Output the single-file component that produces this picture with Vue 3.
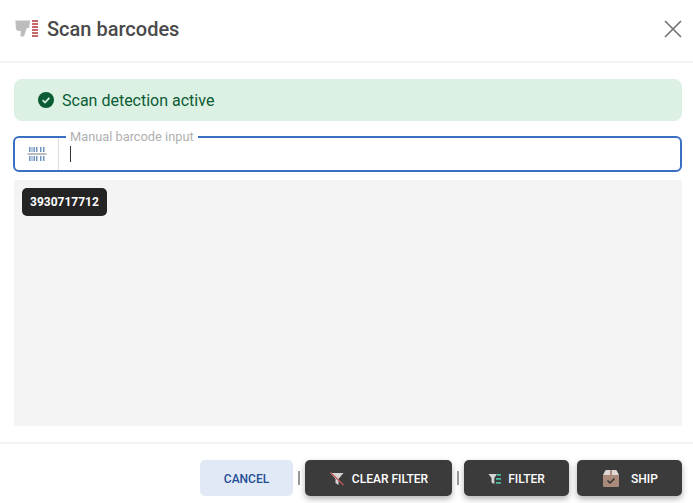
<script setup>
const barcodes = ['3930717712']
</script>

<template>
  <div class="dialog">
    <header class="head">
      <svg class="scan-icon" width="24" height="20" viewBox="0 0 24 20">
        <path d="M1 2H14.500L13.500 8.500H11.200L8.500 17H6L6.500 11.500H3.500L1.500 10Z" fill="#bdbdbd" stroke="#bdbdbd" stroke-width="1.200" stroke-linejoin="round" />
        <g fill="#c46868">
          <rect x="17" y="1" width="6" height="2" />
          <rect x="17" y="4" width="6" height="2" />
          <rect x="17" y="7" width="6" height="2" />
          <rect x="17" y="10" width="6" height="2" />
          <rect x="17" y="13" width="6" height="2" />
          <rect x="17" y="16" width="6" height="2" />
        </g>
      </svg>
      <h1 class="title">Scan barcodes</h1>
      <svg class="close" width="18" height="18" viewBox="0 0 18 18">
        <path d="M1 1 17 17M17 1 1 17" stroke="#757575" stroke-width="1.700" fill="none" />
      </svg>
    </header>

    <main class="body">
      <div class="alert">
        <svg width="16" height="16" viewBox="0 0 16 16">
          <circle cx="8" cy="8" r="8" fill="#0b5c33" />
          <path d="M4.600 8.200 7 10.500 11.400 5.900" stroke="#dff0e6" stroke-width="1.700" fill="none" />
        </svg>
        <span>Scan detection active</span>
      </div>

      <div class="field">
        <span class="legend">Manual barcode input</span>
        <div class="addon">
          <svg width="20" height="16" viewBox="0 0 20 16">
            <g fill="#6f93c0">
              <rect x="2" y="1" width="1.500" height="5" /><rect x="4.500" y="1" width="1" height="5" /><rect x="6.500" y="1" width="1.500" height="5" /><rect x="9" y="1" width="1.500" height="5" /><rect x="13" y="1" width="1.500" height="5" /><rect x="16" y="1" width="1.500" height="5" />
              <rect x="2" y="10" width="1.500" height="5" /><rect x="4.500" y="10" width="1" height="5" /><rect x="6.500" y="10" width="1.500" height="5" /><rect x="9" y="10" width="1.500" height="5" /><rect x="13" y="10" width="1.500" height="5" /><rect x="16" y="10" width="1.500" height="5" />
            </g>
            <rect x="0.500" y="7.200" width="19" height="1.600" fill="#adadad" />
          </svg>
        </div>
        <div class="entry"><span class="caret"></span></div>
      </div>

      <section class="results">
        <span v-for="code in barcodes" :key="code" class="chip">{{ code }}</span>
      </section>
    </main>

    <footer class="foot">
      <button class="btn light">CANCEL</button>
      <span class="sep"></span>
      <button class="btn dark clear">
        <svg width="16" height="14" viewBox="0 0 16 14">
          <path d="M1.500 1H14.500L9.500 7V13L6.500 11V7Z" fill="#d5d5d5" />
          <path d="M1.500 0.500 14.500 13" stroke="#c25b5b" stroke-width="1.300" />
        </svg>
        CLEAR FILTER
      </button>
      <span class="sep"></span>
      <button class="btn dark filter">
        <svg width="14" height="12" viewBox="0 0 14 12">
          <path d="M0.500 1H9L6.300 5V11L3.500 9.500V5Z" fill="#d5d5d5" />
          <g fill="#4cb7a0">
            <rect x="9" y="1" width="4" height="1.800" /><rect x="8" y="5" width="5" height="1.800" /><rect x="8" y="9" width="5" height="1.800" />
          </g>
        </svg>
        FILTER
      </button>
      <button class="btn dark ship">
        <svg class="ship-icon" width="16" height="17" viewBox="0 0 16 17">
          <path d="M0 5 2 1Q2.300 0 3.500 0H12.500Q13.700 0 14 1L16 5Z" fill="#e0d8d4" />
          <path d="M0 5H16V15.500Q16 17 14.500 17H1.500Q0 17 0 15.500Z" fill="#a98a7b" />
          <rect x="7" y="0" width="2" height="5" fill="#a98a7b" />
          <path d="M4.500 10.500 7 13 11.500 8.500" stroke="#333" stroke-width="1.500" fill="none" />
        </svg>
        <span class="ship-label">SHIP</span>
      </button>
    </footer>
  </div>
</template>

<style scoped>
.dialog {
  width: 693px;
  height: 503px;
  background: #fff;
  display: flex;
  flex-direction: column;
  font-family: Roboto, "Liberation Sans", sans-serif;
  overflow: hidden;
}
.head {
  height: 63px;
  flex: none;
  box-sizing: border-box;
  display: flex;
  align-items: center;
  padding: 0 11px 3px 15px;
  gap: 8px;
  border-bottom: 2px solid #f4f4f4;
}
.title {
  margin: 0;
  flex: 1;
  font-size: 20px;
  font-weight: 500;
  color: #4a4a4a;
}
.body {
  flex: 1;
  display: flex;
  flex-direction: column;
  padding: 16px 11px 0 14px;
}
.alert {
  height: 42px;
  box-sizing: border-box;
  border-radius: 8px;
  background: #dcf0e4;
  color: #0b5c33;
  display: flex;
  align-items: center;
  gap: 8px;
  padding-left: 24px;
  font-size: 16px;
}
.field {
  position: relative;
  height: 36px;
  box-sizing: border-box;
  margin: 15px 0 8px -1px;
  border: 2px solid #3a70c4;
  border-radius: 6px;
  display: flex;
}
.legend {
  position: absolute;
  left: 51px;
  top: -9px;
  padding: 0 4px;
  background: #fff;
  font-size: 12.800px;
  line-height: 15px;
  color: #b0b0b0;
}
.addon {
  width: 43px;
  flex: none;
  border-right: 1px solid #dedede;
  display: flex;
  align-items: center;
  justify-content: center;
}
.entry {
  flex: 1;
  display: flex;
  align-items: center;
  padding-left: 11px;
}
.caret {
  width: 1px;
  height: 16px;
  background: #333;
}
.results {
  height: 246px;
  box-sizing: border-box;
  background: #f4f4f4;
  padding: 8px;
  display: flex;
  align-items: flex-start;
}
.chip {
  background: #242424;
  color: #fff;
  border-radius: 5px;
  font-size: 12px;
  font-weight: 700;
  line-height: 28px;
  padding: 0 8px;
}
.foot {
  height: 61px;
  flex: none;
  box-sizing: border-box;
  border-top: 2px solid #f4f4f4;
  display: flex;
  align-items: flex-start;
  justify-content: flex-end;
  padding: 16px 11px 0 0;
}
.btn {
  height: 36px;
  box-sizing: border-box;
  border: 0;
  border-radius: 5px;
  font: 500 12px Roboto, "Liberation Sans", sans-serif;
  display: flex;
  align-items: center;
  justify-content: center;
  padding: 2px 0 0;
}
.light {
  width: 93px;
  background: #e1e9f6;
  color: #234e97;
}
.dark {
  background: #3b3b3b;
  color: #fff;
  box-shadow: 0 3px 6px rgba(0, 0, 0, 0.3);
}
.clear { width: 147px; gap: 7px; }
.filter { width: 105px; gap: 6px; }
.ship { width: 105px; margin-left: 8px; padding-left: 2px; }
.ship-icon { margin-top: -2px; }
.ship-label { margin-left: 12px; }
.sep {
  width: 2px;
  height: 14px;
  margin: 11px 5px 0;
  background: #9a9a9a;
}
</style>

<style>
body { background: #fff; }
</style>
